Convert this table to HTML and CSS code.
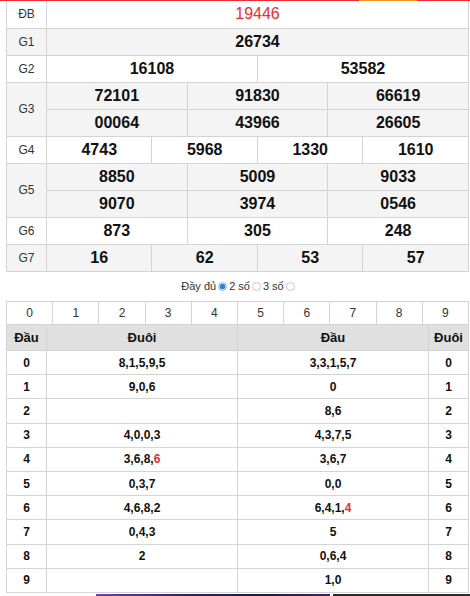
FILE: index.html
```html
<!DOCTYPE html>
<html>
<head>
<meta charset="utf-8">
<link rel="stylesheet" href="styles.css">
</head>
<body>
<div class="topbar"><div class="topbar-accent"></div></div>
<div class="wrap">
  <table class="kq">
    <colgroup>
      <col class="c-lbl"><col><col><col><col><col><col><col><col><col><col><col><col>
    </colgroup>
    <tr class="row-w"><td class="lbl">ĐB</td><td colspan="12" class="num db">19446</td></tr>
    <tr class="row-g"><td class="lbl">G1</td><td colspan="12" class="num">26734</td></tr>
    <tr class="row-w"><td class="lbl">G2</td><td colspan="6" class="num">16108</td><td colspan="6" class="num">53582</td></tr>
    <tr class="row-g"><td class="lbl" rowspan="2">G3</td><td colspan="4" class="num">72101</td><td colspan="4" class="num">91830</td><td colspan="4" class="num">66619</td></tr>
    <tr class="row-g"><td colspan="4" class="num">00064</td><td colspan="4" class="num">43966</td><td colspan="4" class="num">26605</td></tr>
    <tr class="row-w"><td class="lbl">G4</td><td colspan="3" class="num">4743</td><td colspan="3" class="num">5968</td><td colspan="3" class="num">1330</td><td colspan="3" class="num">1610</td></tr>
    <tr class="row-g"><td class="lbl" rowspan="2">G5</td><td colspan="4" class="num">8850</td><td colspan="4" class="num">5009</td><td colspan="4" class="num">9033</td></tr>
    <tr class="row-g"><td colspan="4" class="num">9070</td><td colspan="4" class="num">3974</td><td colspan="4" class="num">0546</td></tr>
    <tr class="row-w"><td class="lbl">G6</td><td colspan="4" class="num">873</td><td colspan="4" class="num">305</td><td colspan="4" class="num">248</td></tr>
    <tr class="row-g"><td class="lbl">G7</td><td colspan="3" class="num">16</td><td colspan="3" class="num">62</td><td colspan="3" class="num">53</td><td colspan="3" class="num">57</td></tr>
  </table>

  <div class="opts">
    <span>Đầy đủ</span><span class="radio checked"></span><span>2 số</span><span class="radio"></span><span>3 số</span><span class="radio"></span>
  </div>

  <table class="digits">
    <tr><td>0</td><td>1</td><td>2</td><td>3</td><td>4</td><td>5</td><td>6</td><td>7</td><td>8</td><td>9</td></tr>
  </table>
  <table class="loto">
    <colgroup><col class="c-side"><col><col><col class="c-side"></colgroup>
    <tr class="head"><th>Đầu</th><th>Đuôi</th><th>Đầu</th><th>Đuôi</th></tr>
    <tr><td>0</td><td>8,1,5,9,5</td><td>3,3,1,5,7</td><td>0</td></tr>
    <tr><td>1</td><td>9,0,6</td><td>0</td><td>1</td></tr>
    <tr><td>2</td><td></td><td>8,6</td><td>2</td></tr>
    <tr><td>3</td><td>4,0,0,3</td><td>4,3,7,5</td><td>3</td></tr>
    <tr><td>4</td><td>3,6,8,<span class="red">6</span></td><td>3,6,7</td><td>4</td></tr>
    <tr><td>5</td><td>0,3,7</td><td>0,0</td><td>5</td></tr>
    <tr><td>6</td><td>4,6,8,2</td><td>6,4,1,<span class="red">4</span></td><td>6</td></tr>
    <tr><td>7</td><td>0,4,3</td><td>5</td><td>7</td></tr>
    <tr><td>8</td><td>2</td><td>0,6,4</td><td>8</td></tr>
    <tr><td>9</td><td></td><td>1,0</td><td>9</td></tr>
  </table>
</div>
<div class="ad-strip"><div class="ad-a"></div><div class="ad-b"></div></div>
</body>
</html>
```

FILE: styles.css
```css
html, body {
  margin: 0;
  padding: 0;
  background: #fff;
  font-family: "Liberation Sans", Arial, sans-serif;
  color: #000;
  overflow: hidden;
  height: 596px;
}

.topbar {
  height: 1px;
  background: #ee2a2f;
}
.topbar-accent {
  margin-left: 359px;
  width: 58px;
  height: 1px;
  background: #f7941d;
}

.wrap {
  margin-left: 6px;
  width: 463px;
}

table {
  border-collapse: collapse;
  table-layout: fixed;
  width: 463px;
}

td, th {
  border: 1px solid #d4d4d4;
  padding: 0;
  text-align: center;
}

.kq .c-lbl { width: 40px; }
.kq tr { height: 27px; }
.kq tr:first-child td { border-top: none; }
.row-g td { background: #f4f4f4; }
.row-w td { background: #fff; }
.kq .lbl {
  font-size: 12px;
  color: #333;
}
.kq .num {
  font-size: 16px;
  font-weight: bold;
  color: #111;
}
.kq .db {
  color: #ee2a2f;
  font-weight: normal;
}

.opts {
  height: 29px;
  display: flex;
  align-items: center;
  justify-content: center;
  gap: 2px;
  font-size: 11px;
  color: #333;
  padding-left: 1px;
}
.radio {
  width: 7px;
  height: 7px;
  border: 1px solid #c8c8c8;
  border-radius: 50%;
  background: #fff;
  display: inline-block;
}
.radio.checked {
  border-color: #8ab8ee;
  background: radial-gradient(circle, #2f7fe0 0 2.5px, #cfe2fa 3px);
}

.digits tr { height: 23px; }
.digits td {
  font-size: 12px;
  color: #333;
}

.loto { border-top: none; }
.loto .c-side { width: 40px; }
.loto tr.head { height: 26px; }
.loto tr.head th {
  border-top: none;
  background: #e0e0e0;
  font-size: 13px;
  font-weight: bold;
  color: #111;
}
.loto tr { height: 24.2px; }
.loto td {
  font-size: 12px;
  font-weight: bold;
  color: #111;
}
.red { color: #ee2a2f; }

.ad-strip {
  display: flex;
  height: 3px;
  margin-top: 1px;
}
.ad-a {
  margin-left: 96px;
  width: 234px;
  background: linear-gradient(90deg, #6a3fb8, #2a1f6a 40%, #1d1a4a 70%, #3a2060);
}
.ad-b {
  margin-left: 3px;
  flex: 1;
  background: #2b2b2b;
}
```
